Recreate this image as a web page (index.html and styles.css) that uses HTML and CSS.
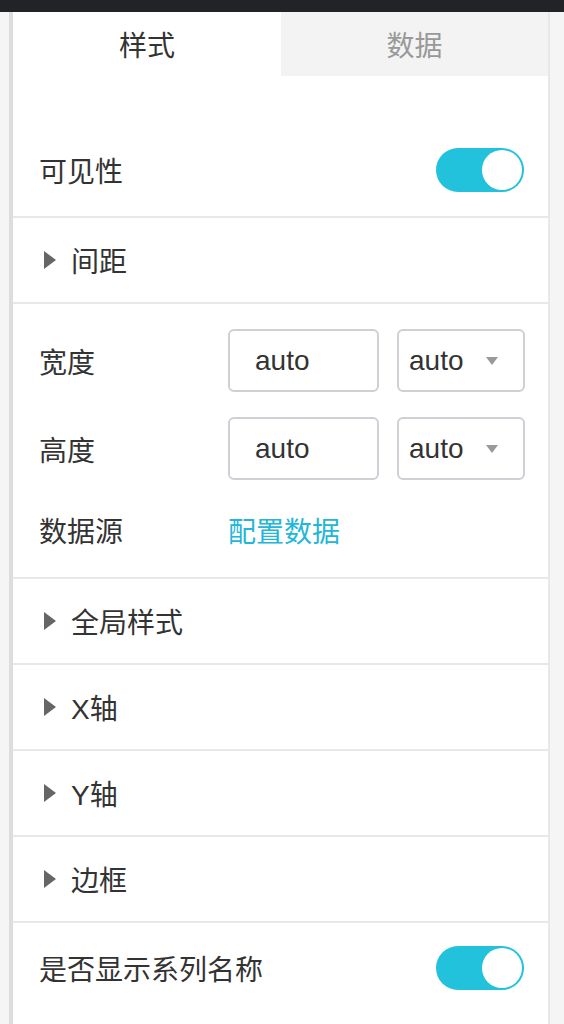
FILE: index.html
```html
<!DOCTYPE html>
<html lang="zh">
<head>
<meta charset="UTF-8" />
<meta name="viewport" content="width=device-width, initial-scale=1" />
<title>属性面板</title>
<link rel="stylesheet" href="styles.css">
</head>
<body>
<div class="topbar"></div>

<div class="page">
  <div class="panel">
    <div class="tabs">
      <div class="tab active">样式</div>
      <div class="tab">数据</div>
    </div>

    <div class="spacer"></div>

    <div class="row switch-row first">
      <span class="label">可见性</span>
      <span class="toggle on"><span class="knob"></span></span>
    </div>

    <div class="row fold">
      <span class="caret"></span>
      <span class="label">间距</span>
    </div>

    <div class="form">
      <div class="form-row">
        <span class="label">宽度</span>
        <div class="field">auto</div>
        <div class="select">auto<span class="arrow"></span></div>
      </div>
      <div class="form-row">
        <span class="label">高度</span>
        <div class="field">auto</div>
        <div class="select">auto<span class="arrow"></span></div>
      </div>
      <div class="form-row text-row">
        <span class="label">数据源</span>
        <a class="link">配置数据</a>
      </div>
    </div>

    <div class="row fold">
      <span class="caret"></span>
      <span class="label">全局样式</span>
    </div>
    <div class="row fold">
      <span class="caret"></span>
      <span class="label">X轴</span>
    </div>
    <div class="row fold">
      <span class="caret"></span>
      <span class="label">Y轴</span>
    </div>
    <div class="row fold">
      <span class="caret"></span>
      <span class="label">边框</span>
    </div>

    <div class="row switch-row last">
      <span class="label">是否显示系列名称</span>
      <span class="toggle on"><span class="knob"></span></span>
    </div>
  </div>
</div>
</body>
</html>
```

FILE: styles.css
```css
* { box-sizing: border-box; }
html, body {
  margin: 0; padding: 0; height: 100%;
  background: #f5f5f5;
  color: #333;
  font-family: "Liberation Sans", "Noto Sans CJK SC", sans-serif;
  font-size: 28px;
  overflow: hidden;
}

.topbar {
  height: 12px;
  background: #222327;
}

.page {
  display: flex;
  padding-left: 9px;
  height: 1012px;
}

.panel {
  width: 541px;
  background: #fff;
  border-left: 4px solid #ddd;
  border-right: 2px solid #e8e8e8;
}

.tabs {
  display: flex;
  height: 64px;
}

.tab {
  flex: 1;
  display: flex;
  align-items: center;
  justify-content: center;
  color: #999;
  background: #f3f3f3;
}

.tab.active {
  color: #333;
  background: #fff;
  flex: 0 0 268px;
}

.spacer { height: 48px; }

.row {
  display: flex;
  align-items: center;
  height: 86px;
  padding: 0 24px 0 26px;
  border-bottom: 2px solid #e8e8e8;
}

.switch-row {
  height: 90px;
  justify-content: space-between;
}

.switch-row.first { height: 94px; }
.switch-row.last { border-bottom: none; }

.fold { padding-left: 31px; }

.caret {
  width: 0; height: 0;
  border-top: 9px solid transparent;
  border-bottom: 9px solid transparent;
  border-left: 12px solid #666;
  margin-right: 15px;
}

.toggle {
  position: relative;
  width: 88px;
  height: 44px;
  border-radius: 22px;
  background: #22c1dc;
}

.toggle .knob {
  position: absolute;
  top: 2px; right: 2px;
  width: 40px; height: 40px;
  border-radius: 50%;
  background: #fff;
}

.form {
  display: flex;
  flex-direction: column;
  gap: 25px;
  padding: 25px 0 22px 26px;
  border-bottom: 2px solid #e8e8e8;
}

.form-row {
  display: flex;
  align-items: center;
  height: 63px;
}

.form-row.text-row { height: 50px; }

.form-row .label {
  flex: 0 0 189px;
}

.field, .select {
  height: 63px;
  display: flex;
  align-items: center;
  border: 2px solid #cdd1d6;
  border-radius: 6px;
  color: #333;
}

.field {
  width: 151px;
  padding-left: 25px;
  margin-right: 18px;
}

.select {
  width: 128px;
  padding: 0 25px 0 10px;
  justify-content: space-between;
}

.arrow {
  width: 0; height: 0;
  border-left: 6px solid transparent;
  border-right: 6px solid transparent;
  border-top: 8px solid #999;
}

.link {
  color: #22b6d8;
  cursor: pointer;
}
```
